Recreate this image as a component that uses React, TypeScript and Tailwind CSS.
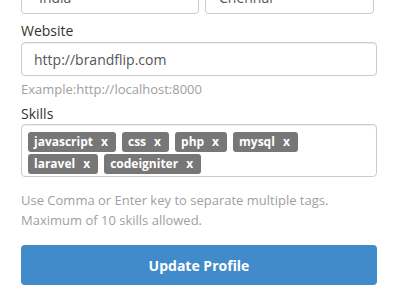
const skills = ['javascript', 'css', 'php', 'mysql', 'laravel', 'codeigniter']

function Tag({ label }: { label: string }) {
  return (
    <span className="flex h-[20px] items-center rounded-[3px] bg-[#777777] pl-[6px] pr-[8px] text-[12px] font-bold leading-none text-white">
      {label}
      <span className="ml-[8px]">x</span>
    </span>
  )
}

export default function App() {
  return (
    <div className="h-[300px] w-[400px] overflow-hidden bg-white font-['Open_Sans',sans-serif]">
      <div className="pl-[21px] pr-[23px]">
        {/* Country / city */}
        <div className="-mt-[20px] flex gap-[6px]">
          <div className="relative flex h-[34px] w-[178px] items-center rounded-[4px] border border-[#cccccc] pl-[17px] text-[14px] text-[#555555] shadow-[inset_0_1px_1px_rgba(0,0,0,0.075)]">
            India
            <svg className="absolute right-[6px] top-[10px]" width="8" height="8" viewBox="0 0 8 8">
              <path d="M1 2 L4 6 L7 2" fill="none" stroke="#888888" strokeWidth="1.2" />
            </svg>
          </div>
          <div className="flex h-[34px] w-[169px] items-center rounded-[4px] border border-[#cccccc] pl-[13px] text-[14px] text-[#555555] shadow-[inset_0_1px_1px_rgba(0,0,0,0.075)]">
            Chennai
          </div>
        </div>

        {/* Website */}
        <label className="mt-[7px] block text-[14px] leading-[20px] text-[#333333]">Website</label>
        <input
          defaultValue="http://brandflip.com"
          className="mt-[1px] block h-[34px] w-full rounded-[4px] border border-[#cccccc] px-[12px] text-[14px] text-[#555555] shadow-[inset_0_1px_1px_rgba(0,0,0,0.075)] outline-none"
        />
        <p className="mt-[3px] text-[13px] leading-[20px] text-[#a0a0a0]">Example:http://localhost:8000</p>

        {/* Skills */}
        <label className="mt-[5px] block text-[14px] leading-[20px] text-[#333333]">Skills</label>
        <div className="flex flex-wrap gap-x-[6px] gap-y-[2px] rounded-[4px] border border-[#cccccc] pb-[2px] pl-[6px] pr-[6px] pt-[7px] shadow-[inset_0_1px_1px_rgba(0,0,0,0.075)]">
          {skills.map((s) => (
            <Tag key={s} label={s} />
          ))}
        </div>
        <p className="mt-[13px] text-[13px] leading-[20px] text-[#a0a0a0]">
          Use Comma or Enter key to separate multiple tags.
          <br />
          Maximum of 10 skills allowed.
        </p>

        <button className="mt-[15px] flex h-[40px] w-full items-center justify-center rounded-[4px] bg-[#428bca] text-[14px] font-bold text-white">
          Update Profile
        </button>
      </div>
    </div>
  )
}
